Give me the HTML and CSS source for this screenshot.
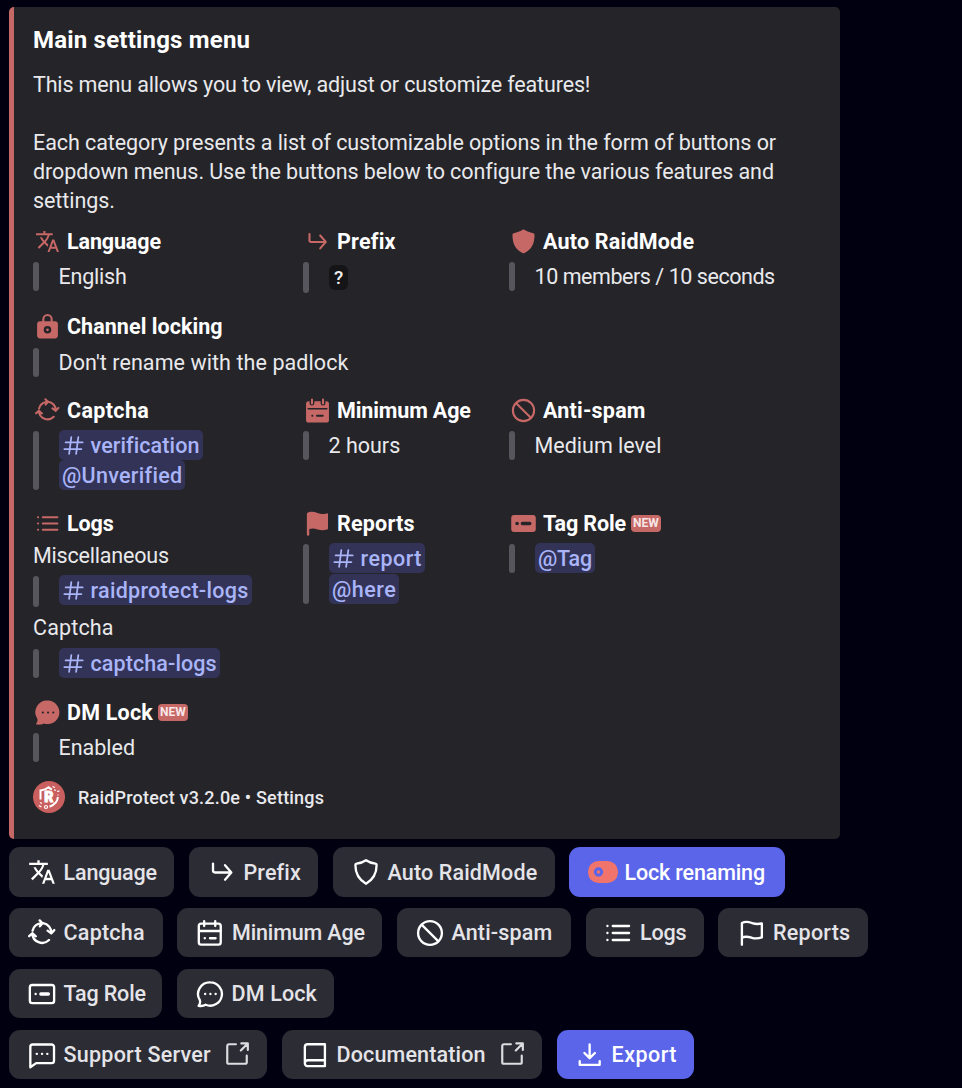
FILE: index.html
```
<!DOCTYPE html>
<html lang="en">
<head>
<meta charset="utf-8">
<title>RaidProtect settings</title>
<link rel="stylesheet" href="styles.css">
</head>
<body>
<svg class="sprite" aria-hidden="true">
  <symbol id="translate" viewBox="0 0 24 24"><path class="solid" d="M12.870 15.070l-2.540-2.510.03-.03c1.740-1.940 2.980-4.170 3.710-6.530H17V4h-7V2H8v2H1v1.990h11.170C11.500 7.920 10.440 9.750 9 11.350 8.070 10.320 7.300 9.190 6.690 8h-2c.73 1.630 1.730 3.170 2.980 4.560l-5.090 5.020L4 19l5-5 3.110 3.110.76-2.040zM18.500 10h-2L12 22h2l1.120-3h4.750L21 22h2l-4.500-12zm-2.620 7l1.620-4.330L19.120 17h-3.240z"/></symbol>
  <symbol id="arrow" viewBox="0 0 24 24"><path d="M4.300 4.800v6a1.600 1.600 0 0 0 1.600 1.600H19.600M14.600 6.200l5.400 6.200-5.400 6.200"/></symbol>
  <symbol id="cycle" viewBox="0 0 24 24"><path d="M18 18A8.400 8.400 0 0 1 3.700 12.500M3.900 10A8.400 8.400 0 0 1 10.500 3.800M13 3.600A8.400 8.400 0 0 1 20 12M1 14.700L3.700 12.200l3 2.600M10 1.200l2.400 2.500-2.200 2.600M16.800 10l3.100 2.300 2.600-2.800"/></symbol>
  <symbol id="ban" viewBox="0 0 24 24"><circle cx="12" cy="12" r="10.200"/><path d="M5 5l14 14"/></symbol>
  <symbol id="list" viewBox="0 0 24 24"><path d="M7.500 6h14M7.500 12h14M7.500 18h14M2.900 6h.1M2.900 12h.1M2.900 18h.1"/></symbol>
  <symbol id="external" viewBox="0 0 24 24"><path d="M11 3H4.500A1.500 1.500 0 0 0 3 4.500v15A1.500 1.500 0 0 0 4.500 21h15a1.500 1.500 0 0 0 1.500-1.500v-6M16 2.200h6v6M21.500 2.700L15.500 8.700"/></symbol>
  <symbol id="hash" viewBox="0 0 24 24"><path d="M9.500 2.500L7 21.500M17.500 2.500L15 21.500M3 8.500h19.500M1.500 16H21"/></symbol>
</svg>

<main class="message">
  <article class="embed">
    <h1 class="title">Main settings menu</h1>
    <p class="desc intro">This menu allows you to view, adjust or customize features!</p>
    <p class="desc">Each category presents a list of customizable options in the form of buttons or<br>dropdown menus. Use the buttons below to configure the various features and<br>settings.</p>

    <div class="fields">
      <section>
        <h2 class="snug"><svg class="icon"><use href="#translate"/></svg>Language</h2>
        <div class="quote"><p class="close">English</p></div>
      </section>
      <section>
        <h2><svg class="icon"><use href="#arrow"/></svg>Prefix</h2>
        <div class="quote tall"><code>?</code></div>
      </section>
      <section>
        <h2><svg class="icon" viewBox="0 0 24 24"><path class="solid" d="M11 .8q1-.6 2 0c2.400 1.600 5 2.700 8.400 3.300q1.200.2 1.200 1.400C22.600 14 20 19.500 13 23q-1 .5-2 0C4 19.500 1.400 14 1.400 5.500q0-1.200 1.200-1.400C6 3.500 8.600 2.400 11 .8z"/></svg>Auto RaidMode</h2>
        <div class="quote"><p class="digits">10 members / 10 seconds</p></div>
      </section>
    </div>

    <div class="fields lock">
      <section>
        <h2 class="level"><svg class="icon" viewBox="0 0 24 24"><path d="M8 9V5a4 4 0 0 1 8 0V9"/><path class="solid" fill-rule="evenodd" d="M5 7h14a3 3 0 0 1 3 3V20.500a3 3 0 0 1-3 3H5a3 3 0 0 1-3-3V10a3 3 0 0 1 3-3zM12 11.600a3.600 3.600 0 1 0 0 7.200 3.600 3.600 0 0 0 0-7.200zM12 13.900a1.300 1.300 0 1 1 0 2.600 1.300 1.300 0 0 1 0-2.600z"/></svg>Channel locking</h2>
        <div class="quote low"><p class="padlock">Don't rename with the padlock</p></div>
      </section>
    </div>

    <div class="fields checks">
      <section>
        <h2 class="wide"><svg class="icon"><use href="#cycle"/></svg>Captcha</h2>
        <div class="quote pair">
          <span class="mention channel"><svg class="hash"><use href="#hash"/></svg>verification</span>
          <span class="mention airy">@Unverified</span>
        </div>
      </section>
      <section>
        <h2 class="snug"><svg class="icon" viewBox="0 0 24 24"><path class="solid" fill-rule="evenodd" d="M3.500 3h17A2.500 2.500 0 0 1 23 5.500V21a2.500 2.500 0 0 1-2.500 2.500h-17A2.500 2.500 0 0 1 1 21V5.500A2.500 2.500 0 0 1 3.500 3zM2.500 9.500v1.600h19V9.500z"/><path class="gap" d="M6.700 0v5M17.300 0v5"/><path d="M6.700 1.500v3.800M17.300 1.500v3.800"/><path class="cut" d="M7 17h.1M11.500 17h5.500"/></svg>Minimum Age</h2>
        <div class="quote"><p>2 hours</p></div>
      </section>
      <section>
        <h2><svg class="icon"><use href="#ban"/></svg>Anti-spam</h2>
        <div class="quote"><p>Medium level</p></div>
      </section>
    </div>

    <div class="fields logs">
      <section>
        <h2 class="snug"><svg class="icon"><use href="#list"/></svg>Logs</h2>
        <p class="sub close">Miscellaneous</p>
        <div class="quote tall"><span class="mention channel airy"><svg class="hash"><use href="#hash"/></svg>raidprotect-logs</span></div>
        <p class="sub second">Captcha</p>
        <div class="quote last"><span class="mention channel"><svg class="hash"><use href="#hash"/></svg>captcha-logs</span></div>
      </section>
      <section>
        <h2><svg class="icon" viewBox="0 0 24 24"><path class="solid" d="M1.800 2.200C5 .2 8.500.6 12 2c3 1.200 5.800 1.200 8.700.3.800-.2 1.400.2 1.400 1v13.200c0 .7-.3 1.100-1 1.300-3 .9-6 .9-9-.1-2.700-.9-5.300-1.200-8-.3V22.500a1.150 1.150 0 0 1-2.300 0z"/></svg>Reports</h2>
        <div class="quote pair spaced">
          <span class="mention channel loose"><svg class="hash"><use href="#hash"/></svg>report</span>
          <span class="mention loose">@here</span>
        </div>
      </section>
      <section>
        <h2 class="snug"><svg class="icon" viewBox="0 0 24 24"><path class="solid" d="M3 3.800h18A2.800 2.800 0 0 1 23.800 6.600v10.800a2.800 2.800 0 0 1-2.800 2.800H3a2.800 2.800 0 0 1-2.800-2.800V6.600a2.800 2.800 0 0 1 2.800-2.800z"/><path class="cut bold" d="M5.800 12h.1M11 12h7"/></svg>Tag Role<span class="new">NEW</span></h2>
        <div class="quote"><span class="mention close">@Tag</span></div>
      </section>
    </div>

    <div class="fields dm">
      <section>
        <h2><svg class="icon" viewBox="0 0 24 24"><path class="solid" d="M12.500.5a11.300 11.300 0 1 1-4 22c-1.600 1-4.200 1.400-6.800 1-.8-.1-1-.8-.4-1.300 1.200-1.200 1.400-2.700.9-4.200A11.300 11.300 0 0 1 12.500.5z"/><path class="cut" d="M7.500 12h.1M12.500 12h.1M17.500 12h.1"/></svg>DM Lock<span class="new">NEW</span></h2>
        <div class="quote"><p>Enabled</p></div>
      </section>
    </div>

    <footer class="footer">
      <svg class="logo" viewBox="0 0 32 32">
        <circle cx="16" cy="16" r="16"/>
        <path d="M7.500 18.500V9.500c3.500-.3 6-1.300 8-3.200 1.300 1 2.200 1.700 3.500 2.200M24.800 16c0 4.500-3.500 7.800-8.300 9.700"/>
        <path class="thin" d="M19.500 5.500l2.500 1M21 8.800l2 .7M24 10.500l2.500-.7M25 13.500v1M7 21.500l2 1M6 24.500l2.500 1.500"/>
        <circle class="thin" cx="13" cy="26" r="1.500"/>
        <text x="11.200" y="21.300">R</text>
      </svg>
      <span>RaidProtect v3.2.0e • Settings</span>
    </footer>
  </article>

  <nav class="actions">
    <div class="row first">
      <button class="snug"><svg class="icon"><use href="#translate"/></svg>Language</button>
      <button class="offset"><svg class="icon"><use href="#arrow"/></svg>Prefix</button>
      <button class="offset"><svg class="icon" viewBox="0 0 24 24"><path d="M12 1.900c2.400 1.600 5 2.600 8 3 .8.100 1.100.5 1.100 1.200 0 7.700-2.700 12.400-9.100 16-6.400-3.600-9.100-8.300-9.100-16 0-.7.3-1.100 1.100-1.200 3-.4 5.600-1.400 8-3z"/></svg>Auto RaidMode</button>
      <button class="primary snug offset"><svg class="toggle" viewBox="0 0 30 22"><rect width="30" height="22" rx="10.500"/><circle cx="10.500" cy="11" r="3.200"/></svg>Lock renaming</button>
    </div>
    <div class="row second">
      <button class="wide"><svg class="icon"><use href="#cycle"/></svg>Captcha</button>
      <button class="snug offset"><svg class="icon" viewBox="0 0 24 24"><rect x="2.400" y="4" width="18.800" height="18" rx="2"/><path d="M3 10.300h18M7 1.900V6M16.500 1.900V6M7.500 16.500h.1M12 16.500h4.800"/></svg>Minimum Age</button>
      <button class="offset"><svg class="icon"><use href="#ban"/></svg>Anti-spam</button>
      <button class="snug"><svg class="icon"><use href="#list"/></svg>Logs</button>
      <button class="wide offset"><svg class="icon" viewBox="0 0 24 24"><path d="M4.200 22V3.400C8 1.300 10.500 2.600 13 3.500c2.900 1 5.300 1 8.300.3v12c-3 1-5.500 1.200-8.500.3-2.700-.8-5.400-1.700-8.600-.1"/></svg>Reports</button>
    </div>
    <div class="row third">
      <button class="snug"><svg class="icon" viewBox="0 0 24 24"><rect x="1.600" y="4.300" width="20.800" height="15.500" rx="2"/><path d="M6.500 12h.1"/><path class="bold" d="M11 12h6.500"/></svg>Tag Role</button>
      <button class="offset"><svg class="icon" viewBox="0 0 24 24"><path d="M12.300 2a10 10 0 1 1-4 19.200c-1.500.9-3.800 1.300-6 .9 1.200-1.400 1.500-3 1-4.800A10 10 0 0 1 12.300 2zM7.800 12h.1M12.300 12h.1M16.800 12h.1"/></svg>DM Lock</button>
    </div>
    <div class="row fourth">
      <button class="wide"><svg class="icon" viewBox="0 0 24 24"><path d="M2 22.500V5A2 2 0 0 1 4 3h16A2 2 0 0 1 22.300 5v12a2 2 0 0 1-2 2H7zM7.500 11h.1M12 11h.1M16.500 11h.1"/></svg>Support Server<svg class="icon link"><use href="#external"/></svg></button>
      <button class="offset"><svg class="icon" viewBox="0 0 24 24"><path d="M20.500 16.500H5.500a2.500 2.500 0 0 0-2.200 2.500V5A2.300 2.300 0 0 1 5.600 2.800H20.500v18.700H5.500A2.300 2.300 0 0 1 3.300 19"/></svg>Documentation<svg class="icon link"><use href="#external"/></svg></button>
      <button class="primary loose offset"><svg class="icon" viewBox="0 0 24 24"><path d="M11.700 3v11.500M7.200 10.300l4.500 4.400 4.500-4.400M3.200 17.200v3.200H20.300v-3.200"/></svg>Export</button>
    </div>
  </nav>
</main>
</body>
</html>
```
FILE: styles.css
```
* { box-sizing: border-box; }

body {
  margin: 0;
  background: #010011;
  color: #e9e9ec;
  font: 400 21.5px/29px Roboto, "Liberation Sans", sans-serif;
}

h1, h2, p { margin: 0; font-size: inherit; white-space: nowrap; }

.sprite { position: absolute; width: 0; height: 0; }

svg { flex: none; }

.icon, .hash, symbol {
  fill: none;
  stroke: currentColor;
  stroke-width: 2;
  stroke-linecap: round;
  stroke-linejoin: round;
}

.solid { fill: currentColor; stroke: none; }
.cut { stroke: #242429; }
.cut.bold { stroke-width: 3.4; }
.gap { stroke: #242429; stroke-width: 4.6; }
.bold { stroke-width: 2.8; }

.message { padding: 7px 0 0 9px; }

.embed {
  width: 830.5px;
  height: 832px;
  padding: 19px 19px 0;
  border-left: 5px solid #c66866;
  border-radius: 5px;
  background: #242429;
}

.title {
  color: #fff;
  font-size: 24px;
  font-weight: 700;
  letter-spacing: .2px;
  margin-bottom: 15px;
}

.desc { letter-spacing: -.07px; }
.desc.intro { letter-spacing: -.15px; }
.desc + .desc { margin-top: 29px; }

.fields {
  display: grid;
  grid-template-columns: 270px 206px 1fr;
  height: 85px;
  margin-top: 12px;
}
.fields + .fields { margin-top: 0; }
.fields.lock { height: 84px; }
.fields.checks { height: 113px; }
.fields.logs { height: 189px; }
.fields.dm { height: 83px; }

h2 {
  display: flex;
  align-items: center;
  height: 29px;
  margin-bottom: 6px;
  color: #fff;
  font-weight: 700;
  letter-spacing: .2px;
}
h2.wide { letter-spacing: .35px; }
h2.snug { letter-spacing: -.13px; }
h2.level { letter-spacing: .05px; }
h2 .icon { width: 25px; height: 25px; margin: 0 7px 0 2px; color: #c66866; }

.new {
  margin-left: 5px;
  padding: 0 2px;
  border-radius: 4px;
  background: #c66866;
  color: #f7e6e6;
  font-size: 12px;
  font-weight: 700;
  line-height: 17px;
  letter-spacing: 0;
}

.quote {
  display: flex;
  flex-direction: column;
  align-items: flex-start;
  position: relative;
  height: 29px;
  padding-left: 26px;
}
.quote > p { margin-left: -.5px; }
.quote::before {
  content: "";
  position: absolute;
  left: 0;
  top: 0;
  width: 6px;
  height: 100%;
  border-radius: 3px;
  background: #57565d;
}
.quote.tall { height: 31px; }
.quote.pair { height: 59px; }
.quote.spaced { height: 60px; }
.quote.spaced .mention + .mention { margin-top: 1px; }
.quote.low, .quote.last { transform: translateY(1px); }

.digits { letter-spacing: -.45px; }
.padlock { letter-spacing: .08px; }

code {
  margin: 3px 0 0;
  padding: 0 5px;
  border-radius: 6px;
  background: #151518;
  color: #f0f0f2;
  font: 500 19px/25px Roboto, sans-serif;
}

.mention {
  display: flex;
  align-items: center;
  height: 30px;
  margin-top: -1px;
  padding: 0 3px;
  border-radius: 5px;
  background: #333358;
  color: #a9b5f8;
  font-weight: 500;
  letter-spacing: .1px;
  white-space: nowrap;
}
.mention + .mention { margin-top: 0; }
.mention.airy { letter-spacing: .3px; }
.mention.loose, button.loose { letter-spacing: .5px; }
.close, .mention.close { letter-spacing: -.2px; }
.hash { width: 21px; height: 21px; margin: 0 6.5px 0 1px; stroke-width: 2.1; }

.logs h2:has(+ .sub) { margin-bottom: 3px; }
.sub { margin-bottom: 6px; }
.sub.second { margin-top: 6px; letter-spacing: .15px; }

.footer {
  display: flex;
  align-items: center;
  gap: 13px;
  font-size: 18px;
  font-weight: 500;
  letter-spacing: .2px;
}
.logo { width: 32px; height: 32px; fill: #c95f5e; }
.logo path { fill: none; stroke: #fff; stroke-width: 2; }
.logo .thin { fill: none; stroke: #fff; stroke-width: 1.2; }
.logo text { fill: #fff; stroke: #fff; stroke-width: 1; font: 900 14px Roboto, sans-serif; }

.actions { display: grid; gap: 12px; padding-top: 8px; }

.row { display: grid; column-gap: 14.5px; height: 49px; }
.row.first { height: 50px; margin-bottom: -1px; }
.first { grid-template-columns: 165px 129.5px 222px 215.5px; }
.second { grid-template-columns: 153.5px 205px 174.5px 118px 150px; }
.third { grid-template-columns: 153px 157px; }
.fourth { grid-template-columns: 258px 260.5px 137.5px; }

button {
  display: flex;
  align-items: center;
  padding: 0 0 0 18.5px;
  border: 0;
  border-radius: 11px;
  background: #2c2c35;
  color: #e4e4e8;
  font: 500 21.5px/29px Roboto, sans-serif;
  letter-spacing: .15px;
  white-space: nowrap;
}
button.offset { padding-left: 19px; }
button.wide { letter-spacing: .25px; }
button.snug { letter-spacing: -.15px; }
button .icon { width: 28px; height: 28px; margin-right: 8px; color: #fff; }
button .link { width: 26px; height: 26px; margin: 0 0 2px 13px; color: #dcdce0; stroke-width: 1.8; }
button.primary { background: #5a65ea; color: #fff; }

.toggle { width: 30px; height: 22px; margin-right: 6.5px; fill: #f0746c; }
.toggle circle { stroke: #5a65ea; stroke-width: 3; }
```
